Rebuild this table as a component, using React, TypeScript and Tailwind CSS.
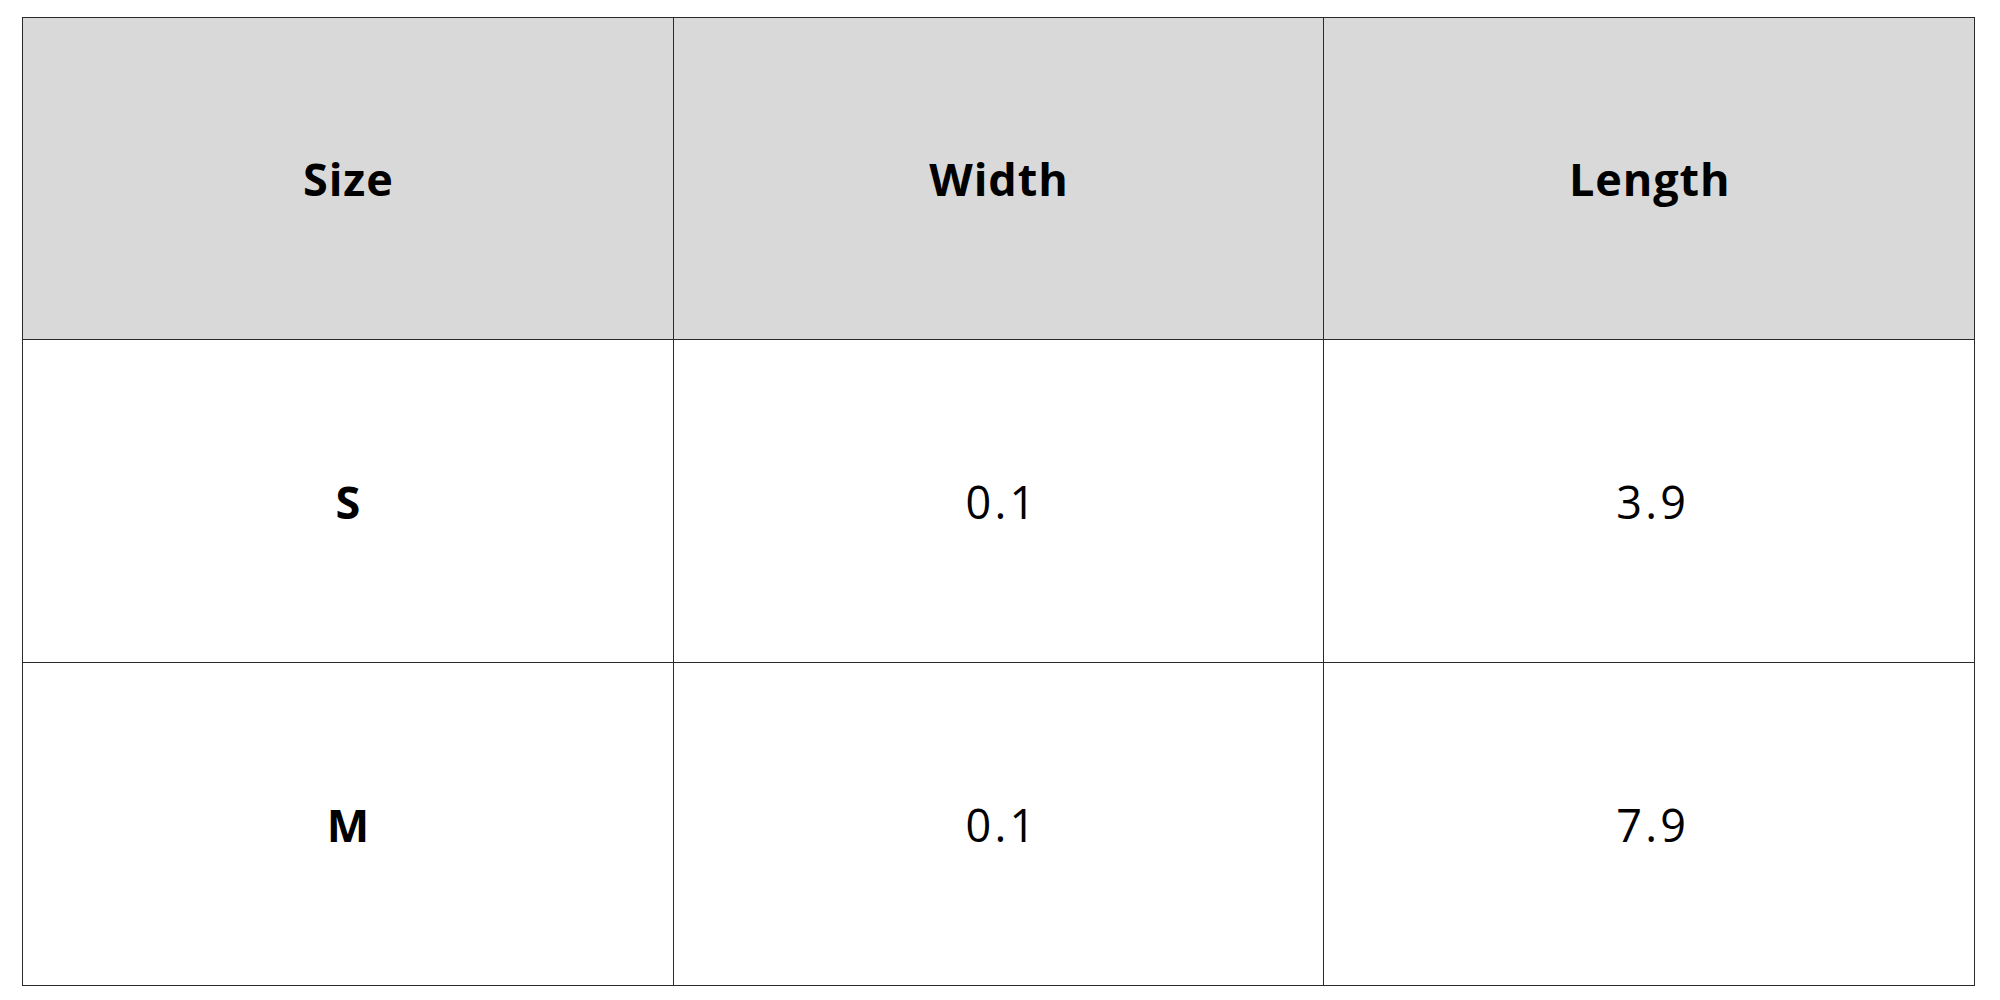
import React from "react";

const rows = [
  ["S", "0.1", "3.9"],
  ["M", "0.1", "7.9"],
];

export default function App() {
  return (
    <div className="w-[2000px] h-[1000px] bg-white pt-[17px] pl-[22px]" style={{ fontFamily: '"Open Sans", "Noto Sans", sans-serif' }}>
      <table className="border-collapse w-[1953px] text-black">
        <thead>
          <tr className="h-[322px] bg-[#d9d9d9]">
            {["Size", "Width", "Length"].map((h) => (
              <th key={h} className="w-[651px] border border-[#2a2a2a] text-[45px] tracking-[0.02em] font-bold text-center align-middle py-0 pr-0 pl-[1px] leading-none">
                {h}
              </th>
            ))}
          </tr>
        </thead>
        <tbody>
          {rows.map((r, i) => (
            <tr key={i} className="h-[323px]">
              {r.map((c, j) => (
                <td key={j} className={`border border-[#2a2a2a] text-[45px] text-center align-middle py-0 pr-0 leading-none ${j === 0 ? "font-bold tracking-[0.02em] pl-[1px]" : "font-normal tracking-[0.07em] pl-[7px]"}`}>
                  {c}
                </td>
              ))}
            </tr>
          ))}
        </tbody>
      </table>
    </div>
  );
}
